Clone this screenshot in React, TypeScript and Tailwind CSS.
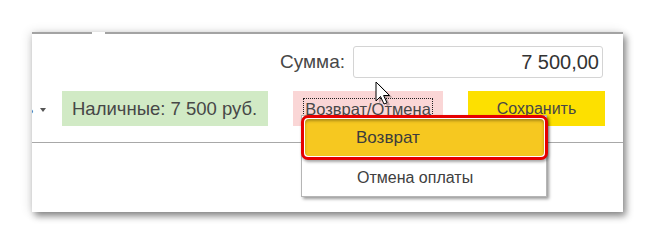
const App = () => {
    return (
        <div className="w-[654px] h-[246px] bg-white pt-[32px] pl-[32px] font-['Liberation_Sans',Arial,sans-serif] text-[#474747]">
            <div className="relative w-[591px] h-[180px] bg-white overflow-hidden shadow-[3px_4px_7px_rgba(0,0,0,0.45),-2px_0_10px_rgba(0,0,0,0.12)]">
                {/* top edge */}
                <div className="flex h-[2px]">
                    <div className="w-[60px] bg-[#a3a3a3]" />
                    <div className="w-[13px]" />
                    <div className="flex-1 bg-[#a3a3a3]" />
                </div>

                {/* sum row */}
                <div className="flex items-center justify-end gap-[8px] pr-[20px] mt-[12px]">
                    <span className="text-[19px]">Сумма:</span>
                    <div className="w-[250px] h-[32px] border border-[#d4d4d4] rounded-[3px] flex items-center justify-end pr-[3px] text-[20px] text-[#333]">
                        7 500,00
                    </div>
                </div>

                {/* buttons row */}
                <div className="flex items-center mt-[13px] h-[35px]">
                    <div className="w-[30px] flex items-center h-full">
                        <span className="text-[16px] -ml-[7px]">ь</span>
                        <span className="ml-[7px] mt-[3px] w-0 h-0 border-l-[3px] border-r-[3px] border-t-[4px] border-l-transparent border-r-transparent border-t-[#555]" />
                    </div>
                    <div className="w-[206px] h-full bg-[#d1eac5] flex items-center pl-[10px] text-[18.5px]">
                        Наличные: 7 500 руб.
                    </div>
                    <div className="ml-[25px] w-[150px] h-full bg-[#fad6d6] flex items-start pt-[7px] justify-center text-[16.5px]">
                        <span className="border border-dotted border-[#222] px-[1px] leading-[20px]">Возврат/Отмена</span>
                    </div>
                    <div className="ml-[25px] w-[137px] h-full bg-[#fde000] flex items-center justify-center text-[16px]">
                        Сохранить
                    </div>
                </div>

                <div className="mt-[16px] h-[1px] bg-[#a8a8a8]" />

                {/* popup menu */}
                <div className="absolute left-[269px] top-[83px] w-[246px] h-[82px] bg-white border border-[#b5b5b5] shadow-[2px_2px_3px_rgba(0,0,0,0.4)] flex flex-col">
                    <div className="h-[45px] -mt-[1px] -ml-[1px] -mr-[2px] border-[3px] border-[#e60000] rounded-[7px] p-[1px] bg-white shadow-[1px_2px_3px_rgba(0,0,0,0.35)]">
                        <div className="h-full rounded-[4px] bg-[#f6c820] shadow-[inset_0_2px_3px_rgba(0,0,0,0.3)] flex items-center pl-[51px] text-[17px] text-[#3c3c3c]">
                            Возврат
                        </div>
                    </div>
                    <div className="flex-1 flex items-center pl-[55px] text-[16px] text-[#404040]">Отмена оплаты</div>
                </div>

                {/* mouse cursor */}
                <svg className="absolute left-[343px] top-[49px]" width="20" height="26" viewBox="0 0 20 26">
                    <path d="M2 1 L2 20 L6.5 15.5 L10 23 L13 21.8 L9.6 14.5 L15.5 14.5 Z" fill="rgba(0,0,0,0.25)" transform="translate(2,2)" />
                    <path d="M1 1 L1 20 L5.5 15.5 L9 23 L12 21.8 L8.6 14.5 L14.5 14.5 Z" fill="#fff" stroke="#000" strokeWidth="1" strokeLinejoin="round" />
                </svg>
            </div>
        </div>
    );
};

export default App;
